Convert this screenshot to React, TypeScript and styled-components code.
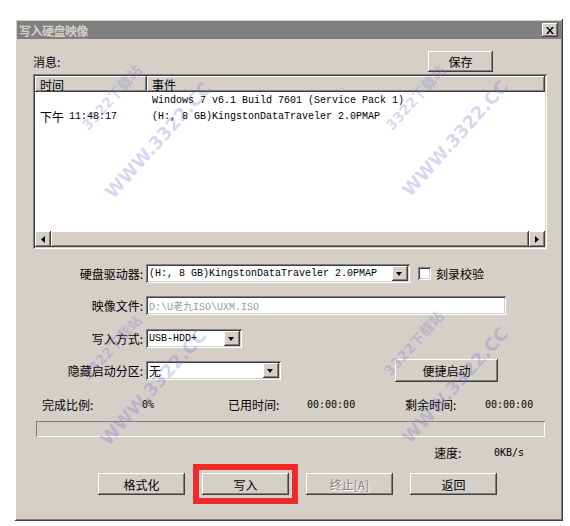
import styled, { createGlobalStyle, css } from "styled-components";

const GlobalStyle = createGlobalStyle`
  html, body {
    margin: 0;
    padding: 0;
    background: #ffffff;
  }
  body {
    font-family: "Noto Sans CJK SC", "Liberation Sans", sans-serif;
    font-size: 12px;
    color: #000;
  }
`;

const raised = css`
  background: #d4d0c8;
  box-shadow: inset -1px -1px #404040, inset 1px 1px #ffffff,
    inset -2px -2px #808080, inset 2px 2px #d4d0c8;
`;

const sunken = css`
  box-shadow: inset 1px 1px #808080, inset -1px -1px #ffffff,
    inset 2px 2px #404040, inset -2px -2px #d4d0c8;
`;

const mono = css`
  font-family: "Liberation Mono", "DejaVu Sans Mono", "Noto Sans CJK SC", monospace;
  font-size: 10px;
`;

export default function App() {
  return (
    <>
      <GlobalStyle />
      <Page>
        <Window>
          <TitleBar>
            <TitleText>写入硬盘映像</TitleText>
            <CloseButton>
              <svg width="8" height="7" viewBox="0 0 8 7">
                <path d="M0 0h2l2 2.5L6 0h2L5 3.5 8 7H6L4 4.5 2 7H0l3-3.5z" fill="#000" />
              </svg>
            </CloseButton>
          </TitleBar>

          <Content>
            <TopRow>
              <span>消息:</span>
              <Button $w={65} $h={21} style={{ marginRight: 54 }}>保存</Button>
            </TopRow>

            <ListView>
              <ListHeader>
                <HeaderCell $w={112}>时间</HeaderCell>
                <HeaderCell>事件</HeaderCell>
              </ListHeader>
              <ListRow>
                <Cell $w={112}></Cell>
                <Cell><MonoText>Windows 7 v6.1 Build 7601 (Service Pack 1)</MonoText></Cell>
              </ListRow>
              <ListRow>
                <Cell $w={112}>下午<MonoText>11:48:17</MonoText></Cell>
                <Cell><MonoText>(H:, 8 GB)KingstonDataTraveler 2.0PMAP</MonoText></Cell>
              </ListRow>
              <Spacer />
              <ScrollBar>
                <ScrollArrow>
                  <svg width="4" height="7" viewBox="0 0 4 7"><path d="M4 0v7L0 3.5z" fill="#000" /></svg>
                </ScrollArrow>
                <ScrollTrack />
                <ScrollArrow>
                  <svg width="4" height="7" viewBox="0 0 4 7"><path d="M0 0v7l4-3.5z" fill="#000" /></svg>
                </ScrollArrow>
              </ScrollBar>
            </ListView>

            <FormGrid>
              <Label>硬盘驱动器:</Label>
              <Controls>
                <ComboBox $w={264}>
                  <ComboText>(H:, 8 GB)KingstonDataTraveler 2.0PMAP</ComboText>
                  <DropArrow />
                </ComboBox>
                <CheckBox />
                <CheckLabel>刻录校验</CheckLabel>
              </Controls>

              <Label>映像文件:</Label>
              <Controls>
                <TextInput>D:\U老九ISO\UXM.ISO</TextInput>
              </Controls>

              <Label>写入方式:</Label>
              <Controls>
                <ComboBox $w={96}>
                  <ComboText>USB-HDD+</ComboText>
                  <DropArrow />
                </ComboBox>
              </Controls>

              <Label>隐藏启动分区:</Label>
              <Controls>
                <ComboBox $w={135}>
                  <ComboText $cjk>无</ComboText>
                  <DropArrow />
                </ComboBox>
                <Button $w={103} $h={23} style={{ marginLeft: 114 }}>便捷启动</Button>
              </Controls>
            </FormGrid>

            <StatsRow>
              <StatLabel>完成比例:</StatLabel>
              <StatValue>0%</StatValue>
              <StatLabel>已用时间:</StatLabel>
              <StatValue>00:00:00</StatValue>
              <StatLabel>剩余时间:</StatLabel>
              <StatValue>00:00:00</StatValue>
            </StatsRow>

            <ProgressBar />

            <SpeedRow>
              <span>速度:</span>
              <StatValue>0KB/s</StatValue>
            </SpeedRow>

            <ButtonRow>
              <Button $w={87} $h={22}>格式化</Button>
              <Highlight>
                <Button $w={87} $h={22}>写入</Button>
              </Highlight>
              <Button $w={87} $h={22} $disabled>终止[A]</Button>
              <Button $w={87} $h={22}>返回</Button>
            </ButtonRow>
          </Content>

          <Watermark $x={96} $y={78} $size={14}>3322下载站</Watermark>
          <Watermark $x={143} $y={121} $size={18}>WWW.3322.CC</Watermark>
          <Watermark $x={400} $y={78} $size={14}>3322下载站</Watermark>
          <Watermark $x={440} $y={119} $size={18}>WWW.3322.CC</Watermark>
          <Watermark $x={96} $y={328} $size={14}>3322下载站</Watermark>
          <Watermark $x={138} $y={368} $size={18}>WWW.3322.CC</Watermark>
          <Watermark $x={398} $y={324} $size={14}>3322下载站</Watermark>
          <Watermark $x={440} $y={366} $size={18}>WWW.3322.CC</Watermark>
        </Window>
      </Page>
    </>
  );
}

const Page = styled.div`
  padding: 19px 0 0 15px;
`;

const Window = styled.div`
  position: relative;
  box-sizing: border-box;
  width: 548px;
  height: 502px;
  padding: 2px;
  overflow: hidden;
  ${raised};
`;

const TitleBar = styled.div`
  height: 18px;
  background: #808080;
  display: flex;
  align-items: center;
  justify-content: space-between;
  padding: 0 3px 0 2px;
`;

const TitleText = styled.div`
  color: #d4d0c8;
  font-weight: bold;
  font-size: 12px;
  letter-spacing: -0.5px;
`;

const CloseButton = styled.div`
  width: 16px;
  height: 14px;
  display: flex;
  align-items: center;
  justify-content: center;
  ${raised};
`;

const Content = styled.div`
  padding: 0 14px 0 16px;
  display: flex;
  flex-direction: column;
`;

const TopRow = styled.div`
  margin-top: 12px;
  display: flex;
  align-items: center;
  justify-content: space-between;
  height: 21px;
`;

const Button = styled.div<{ $w: number; $h: number; $disabled?: boolean }>`
  box-sizing: border-box;
  width: ${(p) => p.$w}px;
  height: ${(p) => p.$h}px;
  display: flex;
  align-items: center;
  justify-content: center;
  font-size: 12px;
  color: ${(p) => (p.$disabled ? "#808080" : "#000")};
  text-shadow: ${(p) => (p.$disabled ? "1px 1px #ffffff" : "none")};
  ${raised};
`;

const ListView = styled.div`
  margin-top: 2px;
  height: 175px;
  box-sizing: border-box;
  padding: 2px;
  background: #ffffff;
  display: flex;
  flex-direction: column;
  ${sunken};
`;

const ListHeader = styled.div`
  display: flex;
  height: 16px;
`;

const HeaderCell = styled.div<{ $w?: number }>`
  box-sizing: border-box;
  ${(p) => (p.$w ? `width: ${p.$w}px;` : "flex: 1;")}
  padding-left: 5px;
  display: flex;
  align-items: center;
  background: #d4d0c8;
  box-shadow: inset -1px -1px #404040, inset 1px 1px #ffffff, inset -2px -2px #808080;
`;

const ListRow = styled.div`
  display: flex;
  height: 16px;
  align-items: center;
`;

const Cell = styled.div<{ $w?: number }>`
  ${(p) => (p.$w ? `width: ${p.$w}px;` : "flex: 1;")}
  box-sizing: border-box;
  padding-left: 5px;
  white-space: nowrap;
  display: flex;
  align-items: center;
  gap: 5px;
`;

const MonoText = styled.span`
  ${mono};
`;

const Spacer = styled.div`
  flex: 1;
`;

const ScrollBar = styled.div`
  display: flex;
  height: 16px;
  background: #e6e3dd;
`;

const ScrollArrow = styled.div`
  width: 16px;
  height: 16px;
  display: flex;
  align-items: center;
  justify-content: center;
  ${raised};
`;

const ScrollTrack = styled.div`
  flex: 1;
  ${raised};
`;

const FormGrid = styled.div`
  margin-top: 8px;
  display: grid;
  grid-template-columns: 110px 1fr;
  column-gap: 3px;
  grid-auto-rows: 32.5px;
  align-items: center;
`;

const Label = styled.div`
  text-align: right;
  white-space: nowrap;
`;

const Controls = styled.div`
  display: flex;
  align-items: center;
`;

const ComboBox = styled.div<{ $w: number }>`
  box-sizing: border-box;
  width: ${(p) => p.$w}px;
  height: 19px;
  padding: 2px;
  display: flex;
  align-items: center;
  background: #ffffff;
  ${sunken};
`;

const ComboText = styled.div<{ $cjk?: boolean }>`
  flex: 1;
  padding-left: 1px;
  white-space: nowrap;
  overflow: hidden;
  ${(p) => (p.$cjk ? "font-size: 12px;" : mono)}
`;

const DropArrow = styled.div`
  width: 16px;
  height: 15px;
  position: relative;
  ${raised};
  &::after {
    content: "";
    position: absolute;
    left: 4px;
    top: 6px;
    border-left: 3.5px solid transparent;
    border-right: 3.5px solid transparent;
    border-top: 4px solid #000;
  }
`;

const CheckBox = styled.div`
  margin-left: 8px;
  width: 13px;
  height: 13px;
  box-sizing: border-box;
  background: #ffffff;
  ${sunken};
`;

const CheckLabel = styled.span`
  margin-left: 5px;
`;

const TextInput = styled.div`
  box-sizing: border-box;
  width: 360px;
  height: 19px;
  padding: 0 3px;
  display: flex;
  align-items: center;
  background: #ffffff;
  color: #9a9a9a;
  ${mono};
  ${sunken};
`;

const StatsRow = styled.div`
  height: 34px;
  padding-left: 9px;
  display: grid;
  grid-template-columns: 100px 86px 79px 98px 80px 1fr;
  align-items: center;
`;

const StatLabel = styled.span`
  font-size: 12px;
`;

const StatValue = styled.span`
  font-family: "DejaVu Sans Mono", "Liberation Mono", monospace;
  font-size: 10px;
`;

const ProgressBar = styled.div`
  margin-left: 3px;
  width: 509px;
  height: 16px;
  box-shadow: inset 1px 1px #808080, inset -1px -1px #ffffff;
`;

const SpeedRow = styled.div`
  height: 30px;
  padding-left: 401px;
  display: grid;
  grid-template-columns: 60px 1fr;
  align-items: center;
`;

const ButtonRow = styled.div`
  margin-top: 6px;
  padding-left: 65px;
  display: flex;
  gap: 17px;
`;

const Highlight = styled.div`
  outline: 6px solid #ee2a2a;
  outline-offset: 3px;
`;

const Watermark = styled.div<{ $x: number; $y: number; $size: number }>`
  position: absolute;
  left: ${(p) => p.$x}px;
  top: ${(p) => p.$y}px;
  transform: translate(-50%, -50%) rotate(-48deg);
  font-family: "DejaVu Sans", "Noto Sans CJK SC", sans-serif;
  font-weight: bold;
  font-size: ${(p) => p.$size}px;
  color: rgba(110, 110, 200, 0.28);
  white-space: nowrap;
  pointer-events: none;
`;
